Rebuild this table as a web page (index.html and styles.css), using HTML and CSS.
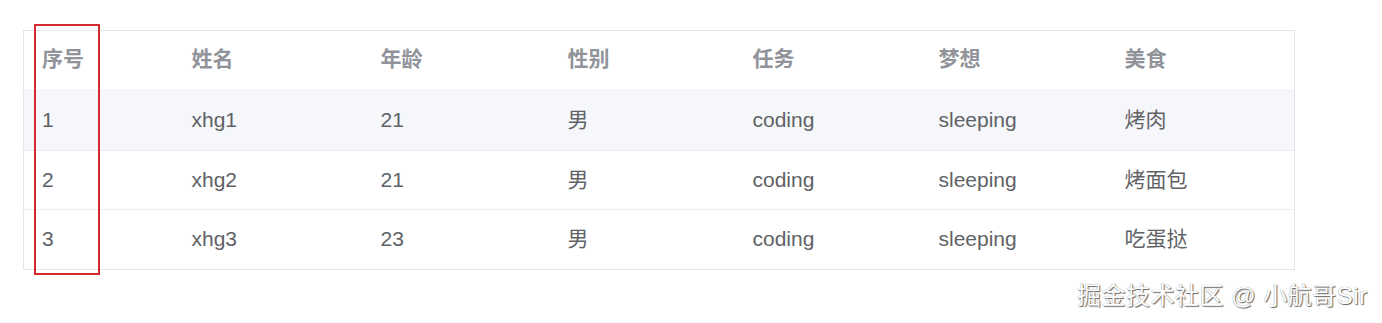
FILE: index.html
```html
<!DOCTYPE html>
<html lang="zh">
<head>
<meta charset="utf-8">
<title>表格</title>
<link rel="stylesheet" href="styles.css">
</head>
<body>
<div class="page">
  <div class="table-wrap">
    <table class="data-table">
      <colgroup>
        <col class="c-index">
        <col class="c-name">
        <col class="c-age">
        <col class="c-sex">
        <col class="c-task">
        <col class="c-dream">
        <col class="c-food">
      </colgroup>
      <thead>
        <tr>
          <th><span class="cjk">序号</span></th><th><span class="cjk">姓名</span></th><th><span class="cjk">年龄</span></th><th><span class="cjk">性别</span></th><th><span class="cjk">任务</span></th><th><span class="cjk">梦想</span></th><th><span class="cjk">美食</span></th>
        </tr>
      </thead>
      <tbody>
        <tr class="striped">
          <td>1</td><td>xhg1</td><td>21</td><td>男</td><td>coding</td><td>sleeping</td><td>烤肉</td>
        </tr>
        <tr class="mid">
          <td>2</td><td>xhg2</td><td>21</td><td>男</td><td>coding</td><td>sleeping</td><td>烤面包</td>
        </tr>
        <tr class="last">
          <td>3</td><td>xhg3</td><td>23</td><td>男</td><td>coding</td><td>sleeping</td><td>吃蛋挞</td>
        </tr>
      </tbody>
    </table>
    <div class="highlight-box"></div>
  </div>
  <div class="watermark">掘金技术社区 @ 小航哥Sir</div>
</div>
</body>
</html>
```

FILE: styles.css
```css
html, body {
  margin: 0;
  padding: 0;
  background: #ffffff;
}

body {
  font-family: "Liberation Sans", "Noto Sans CJK SC", sans-serif;
  width: 1382px;
  height: 323px;
  overflow: hidden;
}

.page {
  position: relative;
  width: 1382px;
  height: 323px;
  padding: 30px 0 0 23px;
  box-sizing: border-box;
}

.table-wrap {
  position: relative;
  width: 1271px;
}

.data-table {
  width: 1271px;
  table-layout: fixed;
  border-collapse: collapse;
  border: 1px solid #e2e5ea;
  font-size: 21px;
  line-height: 24px;
  color: #606266;
}

.c-index { width: 150px; }
.c-name { width: 189px; }
.c-age { width: 187px; }
.c-sex { width: 185px; }
.c-task { width: 186px; }
.c-dream { width: 186px; }
.c-food { width: 188px; }

.data-table th,
.data-table td {
  text-align: left;
  padding: 0 0 0 18px;
  height: 59px;
  border-bottom: 1px solid #ebeef5;
  vertical-align: middle;
  white-space: nowrap;
}

.data-table td {
  height: 58px;
  padding-bottom: 1px;
}

.data-table th {
  font-weight: bold;
  color: #909399;
}

.cjk {
  vertical-align: 0.14em;
}

.data-table tr.striped td {
  background: #f5f7fa;
}

.data-table tr.mid td {
  height: 57px;
}

.data-table tr.last td {
  border-bottom: none;
}

.highlight-box {
  position: absolute;
  left: 11px;
  top: -6px;
  width: 66px;
  height: 251px;
  border: 2px solid #d22a2f;
  box-sizing: border-box;
}

.watermark {
  position: absolute;
  left: 1077px;
  top: 281px;
  font-size: 24px;
  line-height: 30px;
  letter-spacing: 0.5px;
  color: #ffffff;
  white-space: nowrap;
  text-shadow: 1px 1px 1px #666, 0 0 1px #888;
}
```
